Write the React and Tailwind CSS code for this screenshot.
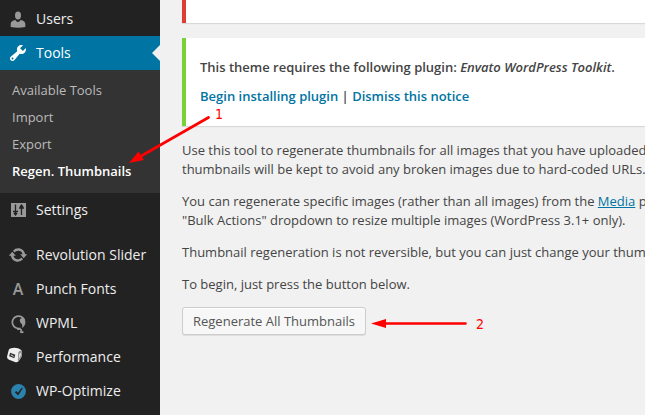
import React from 'react';

function UsersIcon() {
  return (
    <svg width="16" height="17" viewBox="0 0 16 17" fill="#999">
      <ellipse cx="8" cy="4.6" rx="3" ry="4" />
      <path d="M.7 16v-3c0-2.200 1.500-3.300 4.700-4 .7 1.300 1.500 1.900 2.600 1.900s1.900-.6 2.600-1.900c3.200.7 4.700 1.800 4.700 4v3Q8 17.400.7 16z" />
    </svg>
  );
}

function ToolsIcon() {
  return (
    <svg width="20" height="20" viewBox="0 0 20 20" fill="#fff">
      <path d="M16.680 9.770c-1.340 1.340-3.300 1.670-4.950.99l-5.410 6.520c-.99.99-2.590.99-3.580 0s-.99-2.590 0-3.570l6.520-5.420c-.68-1.650-.35-3.610.99-4.950 1.280-1.280 3.120-1.620 4.720-1.060l-2.890 2.890 2.820 2.820 2.860-2.870c.53 1.580.18 3.390-1.080 4.650zM3.810 16.210c.4.390 1.040.39 1.430 0 .4-.4.400-1.040 0-1.430-.39-.4-1.030-.4-1.430 0-.39.390-.39 1.030 0 1.430z" />
    </svg>
  );
}

function SettingsIcon() {
  return (
    <svg width="15" height="14" viewBox="0 0 15 14">
      <rect width="15" height="14" fill="#999" />
      <path d="M4.500 1.500v11M2 8.500h5M10.500 2v10M8 5h5M3 10l1.500 2L6 10M9 4l1.500-2L12 4" stroke="#222" strokeWidth="1.300" fill="none" />
    </svg>
  );
}

function SliderIcon() {
  return (
    <svg width="20" height="20" viewBox="0 0 20 20" fill="#999">
      <path d="M10.200 3.280c3.530 0 6.430 2.610 6.920 6h2.080l-3.500 4-3.500-4h2.320a4.439 4.439 0 0 0-4.320-3.450c-1.450 0-2.730.710-3.540 1.780L4.950 5.660a6.965 6.965 0 0 1 5.250-2.380zm-.4 13.440c-3.520 0-6.430-2.610-6.920-6H.8l3.500-4c1.170 1.330 2.330 2.670 3.500 4H5.480a4.439 4.439 0 0 0 4.320 3.450c1.450 0 2.730-.710 3.540-1.780l1.710 1.950a6.950 6.950 0 0 1-5.250 2.380z" />
    </svg>
  );
}

function LetterIcon() {
  return <span className="text-base leading-none font-semibold text-[#999]">A</span>;
}

function WpmlIcon() {
  return (
    <svg width="17" height="19" viewBox="0 0 17 19" fill="none" stroke="#999">
      <path d="M10.500 13.200A6.200 6.200 0 1 1 14.500 5.500" strokeWidth="1.700" />
      <path d="M9.800 5.600c0-2.600 3.200-3.500 4.800-1 1.700 2.900.6 6.900-2.800 8.500.9-1.800.8-3.200-.3-4.300-1.100-.8-1.700-1.900-1.700-3.200z" fill="#999" stroke="none" />
      <path d="M7.300 14.600c2.600-1.200 5.200.2 3.600 1.600-1 1 1 1.900 2.500.4" strokeWidth="1.500" />
    </svg>
  );
}

function CubeIcon() {
  return (
    <svg width="18" height="17" viewBox="0 0 18 17">
      <path d="M2.800 2.800Q3.500 1.500 5 1.200L8.500.8q4 .2 6 1.700 1.600 1 1.600 3 .1 3-.9 5l-2.700 3.700q-1.400 1.700-3.500.9L3 12.700Q.9 11.800 1 9.800z" fill="#eee" />
      <path d="M12.200 6.200q.2-1.500 1.500-2.100l1.500-.6q.9 1.100.8 3-.1 2.600-1.200 4.300l-3 3.800q.3-4.400.4-8.400z" fill="#888" />
      <path d="m13.300 6.400 1.600-.9q.2 2.500-.6 4.200l-1.800 2.300z" fill="#ddd" />
      <path d="m4.100 5.800 5.200 1.900-1 3.500-5.200-1.900z" fill="#333" />
      <path d="m4.800 7.900 2.800 1.500" stroke="#ddd" />
    </svg>
  );
}

function OptimizeIcon() {
  return (
    <svg width="15" height="15" viewBox="0 0 15 15">
      <circle cx="7.500" cy="7.500" r="7.400" fill="#2b82ae" />
      <path d="m3.800 8.300 1.500-1.200 1.500 1.700 4-5 1 .5-4.700 7.200z" fill="#222" />
    </svg>
  );
}

function MenuRow({ icon, label, active, className = '' }) {
  return (
    <div className={`flex h-[34px] shrink-0 items-center ${active ? 'relative bg-[#0074a2] text-white' : 'text-[#eee]'} ${className}`}>
      <span className="flex w-9 shrink-0 items-center justify-center">{icon}</span>
      <span className="text-sm leading-[18px] whitespace-nowrap">{label}</span>
      {active && <span className="absolute top-[9px] right-0 border-y-8 border-r-8 border-y-transparent border-r-[#f1f1f1]" />}
    </div>
  );
}

function Sidebar() {
  return (
    <nav className="flex w-40 shrink-0 flex-col bg-[#222] pt-0.5">
      <MenuRow icon={<UsersIcon />} label="Users" />
      <MenuRow icon={<ToolsIcon />} label="Tools" active />
      <ul className="h-[123px] shrink-0 bg-[#333] pt-[7px] pl-3 text-[13px] leading-[27px] whitespace-nowrap text-[#bbb]">
        <li>Available Tools</li>
        <li>Import</li>
        <li>Export</li>
        <li className="font-semibold text-white">Regen. Thumbnails</li>
      </ul>
      <MenuRow icon={<SettingsIcon />} label="Settings" />
      <MenuRow icon={<SliderIcon />} label="Revolution Slider" className="mt-[11px]" />
      <MenuRow icon={<LetterIcon />} label="Punch Fonts" />
      <MenuRow icon={<span className="pt-0.5"><WpmlIcon /></span>} label="WPML" />
      <MenuRow icon={<span className="mr-1.5 -mt-1"><CubeIcon /></span>} label="Performance" />
      <MenuRow icon={<OptimizeIcon />} label="WP-Optimize" />
    </nav>
  );
}

function Annotations() {
  return (
    <div className="pointer-events-none absolute inset-0 font-['DejaVu_Sans_Condensed','DejaVu_Sans',sans-serif] text-sm leading-5 text-[#f00]">
      <svg className="absolute inset-0" width="645" height="415" viewBox="0 0 645 415" fill="#f00" stroke="#f00">
        <path d="M208.500 117.500 142 155.500M465.500 323.500h-82" strokeWidth="2.700" strokeLinecap="round" />
        <path d="m129 163 9.500-11.500 5.500 8.500zM371 323.500l15-4.500v9z" stroke="none" />
      </svg>
      <span className="absolute top-[104px] left-[215px]">1</span>
      <span className="absolute top-[314px] left-[476px]">2</span>
    </div>
  );
}

export default function App() {
  return (
    <div className="relative flex h-[415px] w-[645px] overflow-hidden bg-[#f1f1f1] font-['Open_Sans','Noto_Sans',sans-serif]">
      <Sidebar />
      <main className="min-w-0 flex-1 overflow-hidden pl-[22px] text-[13px] leading-[19px] whitespace-nowrap text-[#444]">
        <div className="h-[23px] border-l-4 border-[#dd3d36] bg-white shadow-[0_1px_1px_rgba(0,0,0,0.1)]" />
        <div className="mt-[15px] flex h-[88px] flex-col gap-2.5 border-l-4 border-[#7ad03a] bg-white pt-5 pl-[14px] font-semibold shadow-[0_1px_1px_rgba(0,0,0,0.1)]">
          <p>This theme requires the following plugin: <em>Envato WordPress Toolkit</em>.</p>
          <p><span className="text-[#0074a2]">Begin installing plugin</span> | <span className="text-[#0074a2]">Dismiss this notice</span></p>
        </div>
        <div className="flex flex-col items-start gap-[13px] pt-[15px]">
          <p>Use this tool to regenerate thumbnails for all images that you have uploaded<br />thumbnails will be kept to avoid any broken images due to hard-coded URLs.</p>
          <p>You can regenerate specific images (rather than all images) from the <a className="text-[#0074a2] underline">Media</a> p<br />"Bulk Actions" dropdown to resize multiple images (WordPress 3.1+ only).</p>
          <p>Thumbnail regeneration is not reversible, but you can just change your thum</p>
          <p>To begin, just press the button below.</p>
          <button className="h-7 w-[184px] rounded-[3px] border border-[#ccc] bg-[#f7f7f7] text-[13px] leading-[26px] text-[#555] shadow-[0_1px_0_rgba(0,0,0,0.08),inset_0_1px_0_#fff]">Regenerate All Thumbnails</button>
        </div>
      </main>
      <Annotations />
    </div>
  );
}
